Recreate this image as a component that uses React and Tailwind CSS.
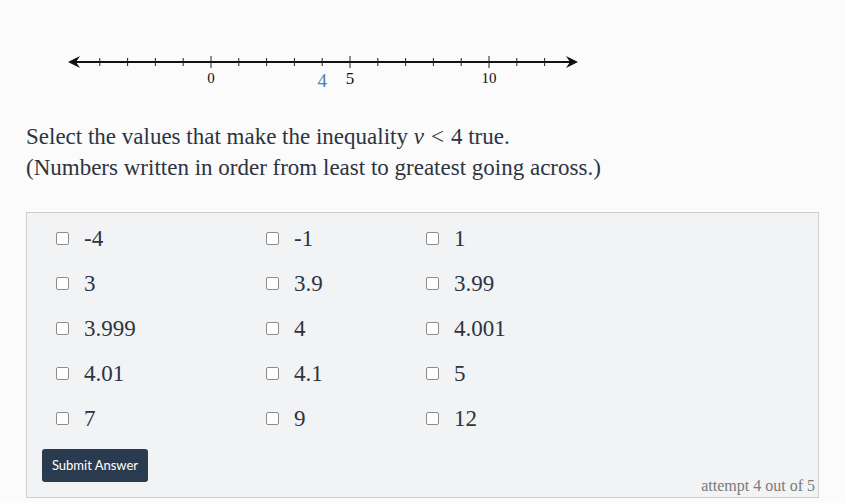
import React from "react";

const rows = [
  ["-4", "-1", "1"],
  ["3", "3.9", "3.99"],
  ["3.999", "4", "4.001"],
  ["4.01", "4.1", "5"],
  ["7", "9", "12"],
];

function NumberLine() {
  const x0 = 211;
  const step = 27.8;
  const ticks = [];
  for (let i = -4; i <= 12; i++) {
    const x = x0 + i * step;
    const major = i % 5 === 0;
    ticks.push(
      <line key={i} x1={x} x2={x} y1={major ? 56 : 58} y2={major ? 68 : 66} stroke="#222" strokeWidth="1" />
    );
  }
  return (
    <svg width="620" height="100" className="block">
      <line x1="72" y1="62" x2="574" y2="62" stroke="#111" strokeWidth="2" />
      <path d="M68 62 L80 56 L76 62 L80 68 Z" fill="#111" />
      <path d="M578 62 L566 56 L570 62 L566 68 Z" fill="#111" />
      {ticks}
      <text x={x0} y="83" textAnchor="middle" fontFamily="'Liberation Serif', serif" fontSize="15" fill="#111">0</text>
      <text x={x0 + 5 * step} y="84" textAnchor="middle" fontFamily="'Liberation Serif', serif" fontSize="17" fill="#111">5</text>
      <text x={x0 + 10 * step} y="83" textAnchor="middle" fontFamily="'Liberation Serif', serif" fontSize="15" fill="#111">10</text>
      <text x={x0 + 4 * step} y="87" textAnchor="middle" fontFamily="'Liberation Serif', serif" fontSize="19" fill="#4a7fb0">4</text>
    </svg>
  );
}

export default function App() {
  return (
    <div className="w-[845px] h-[503px] bg-[#fbfbfb] overflow-hidden" style={{ fontFamily: "'Liberation Serif', serif" }}>
      <div className="h-[110px]">
        <NumberLine />
      </div>
      <div className="pl-[26px] pt-[11px] text-[23px] leading-[31px] text-[#2c3440]">
        <div>
          Select the values that make the inequality{" "}
          <span className="italic">v</span>
          <span className="ml-[7px] mr-[7px]">&lt;</span>
          <span>4</span> true.
        </div>
        <div>(Numbers written in order from least to greatest going across.)</div>
      </div>
      <div className="ml-[26px] mt-[29px] w-[793px] h-[286px] border border-[#cfcfcf] bg-[#f2f3f5] flex flex-col px-[15px] pt-[3px]">
        <div className="pl-[14px] flex flex-col">
          {rows.map((r, i) => (
            <div key={i} className="flex h-[45px] items-center">
              {r.map((v, j) => (
                <label key={j} className={`flex items-center ${j === 0 ? "w-[210px]" : "w-[160px]"}`}>
                  <input
                    type="checkbox"
                    className="appearance-none w-[13px] h-[13px] m-0 border border-[#8c8c8c] rounded-[2px] bg-white"
                  />
                  <span className="ml-[15px] text-[23px] text-[#2c3440] leading-none">{v}</span>
                </label>
              ))}
            </div>
          ))}
        </div>
        <div className="flex items-end justify-between mt-[8px]">
          <button className="h-[33px] w-[106px] rounded-[3px] bg-[#2b3b4f] text-white text-[13px]" style={{ fontFamily: "Lato, sans-serif" }}>
            Submit Answer
          </button>
          <span className="text-[16px] text-[#7a7a7a] leading-none mb-[-12px] mr-[-12px]">attempt 4 out of 5</span>
        </div>
      </div>
    </div>
  );
}
